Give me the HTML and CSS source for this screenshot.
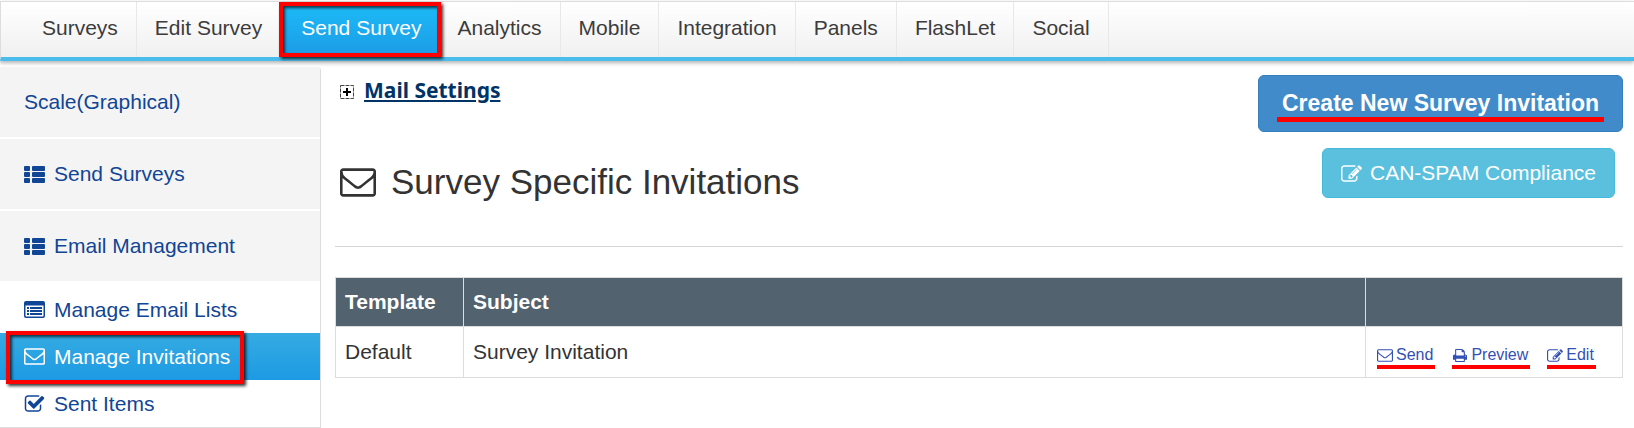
FILE: index.html
```
<!DOCTYPE html>
<html lang="en">
  <head>
    <meta charset="UTF-8" />
    <meta name="viewport" content="width=device-width, initial-scale=1.0" />
    <title>Survey Specific Invitations</title>
    <link rel="stylesheet" href="styles.css">
  </head>
  <body>
    <svg class="sprite" aria-hidden="true">
      <symbol id="envelope" viewBox="0 256 1792 1408">
        <path d="M1664 1504v-768q-32 36-69 66-268 206-426 338-51 43-83 67t-86.500 48.500-102.500 24.500h-2q-48 0-102.500-24.500t-86.500-48.500-83-67q-158-132-426-338-37-30-69-66v768q0 13 9.500 22.500t22.500 9.500h1472q13 0 22.500-9.500t9.500-22.500zm0-1051v-24.500l-.5-13-3-12.500-5.500-9-9-7.500-14-2.500h-1472q-13 0-22.500 9.500t-9.500 22.500q0 168 147 284 193 152 401 317 6 5 35 29.500t46 37.500 44.500 31.500 50.500 27.500 43 9h2q20 0 43-9t50.500-27.500 44.500-31.500 46-37.500 35-29.500q208-165 401-317 54-43 100.500-115.500t46.500-131.500zm128-37v1088q0 66-47 113t-113 47h-1472q-66 0-113-47t-47-113v-1088q0-66 47-113t113-47h1472q66 0 113 47t47 113z"/>
      </symbol>
      <symbol id="pencil" viewBox="0 128 1792 1408">
        <path d="M888 1184l116-116-152-152-116 116v56h96v96h56zm440-720q-16-16-33 1l-350 350q-17 17-1 33t33-1l350-350q17-17 1-33zm80 594v190q0 119-84.500 203.500t-203.500 84.500h-832q-119 0-203.500-84.500t-84.500-203.500v-832q0-119 84.500-203.500t203.500-84.500h832q63 0 117 25 15 7 18 23 3 17-9 29l-49 49q-14 14-32 8-23-6-45-6h-832q-66 0-113 47t-47 113v832q0 66 47 113t113 47h832q66 0 113-47t47-113v-126q0-13 9-22l64-64q15-15 35-7t20 29zm-96-738l288 288-672 672h-288v-288zm444 132l-92 92-288-288 92-92q28-28 68-28t68 28l152 152q28 28 28 68t-28 68z"/>
      </symbol>
      <symbol id="check" viewBox="0 128 1792 1408">
        <path d="M1472 930v318q0 119-84.500 203.500t-203.500 84.500h-832q-119 0-203.500-84.500t-84.500-203.500v-832q0-119 84.500-203.500t203.500-84.500h832q63 0 117 25 15 7 18 23 3 17-9 29l-49 49q-10 10-23 10-3 0-9-2-23-6-45-6h-832q-66 0-113 47t-47 113v832q0 66 47 113t113 47h832q66 0 113-47t47-113v-254q0-13 9-22l64-64q10-10 23-10 6 0 12 3 20 8 20 29zm231-489l-814 814q-24 24-57 24t-57-24l-430-430q-24-24-24-57t24-57l110-110q24-24 57-24t57 24l263 263 647-647q24-24 57-24t57 24l110 110q24 24 24 57t-24 57z"/>
      </symbol>
      <symbol id="print" viewBox="64 128 1664 1536">
        <path d="M448 1536h896v-256h-896v256zm0-640h896v-384h-160q-40 0-68-28t-28-68v-160h-640v640zm1152 64q0-26-19-45t-45-19-45 19-19 45 19 45 45 19 45-19 19-45zm128 0v416q0 13-9.500 22.500t-22.500 9.500h-224v160q0 40-28 68t-68 28h-960q-40 0-68-28t-28-68v-160h-224q-13 0-22.500-9.500t-9.500-22.500v-416q0-79 56.500-135.500t135.500-56.500h64v-544q0-40 28-68t68-28h672q40 0 88 20t76 48l152 152q28 28 48 76t20 88v256h64q79 0 135.500 56.500t56.500 135.500z"/>
      </symbol>
      <symbol id="th-list" viewBox="0 0 21 17">
        <rect width="6" height="5" rx="1"/><rect x="8" width="13" height="5" rx="1"/>
        <rect y="6" width="6" height="5" rx="1"/><rect x="8" y="6" width="13" height="5" rx="1"/>
        <rect y="12" width="6" height="5" rx="1"/><rect x="8" y="12" width="13" height="5" rx="1"/>
      </symbol>
      <symbol id="list-alt" viewBox="0 0 21 17">
        <path fill-rule="evenodd" d="M2 0h17a2 2 0 0 1 2 2v13a2 2 0 0 1-2 2H2a2 2 0 0 1-2-2V2a2 2 0 0 1 2-2zM1.500 4.500V15l.5.5h17l.5-.5V4.500z"/>
        <path d="M3 6h2v2H3zM6 6h12v2H6zM3 9h2v2H3zM6 9h12v2H6zM3 12h2v2H3zM6 12h12v2H6z"/>
      </symbol>
      <symbol id="plus" viewBox="0 0 14 14">
        <rect x=".5" y=".5" width="13" height="13" fill="none" stroke="#444" stroke-dasharray="4 1"/>
        <path d="M6 3h2v3h3v2H8v3H6V8H3V6h3z"/>
      </symbol>
    </svg>

    <nav class="topnav">
      <a href="#">Surveys</a>
      <a href="#">Edit Survey</a>
      <a href="#" class="current">Send Survey</a>
      <a href="#">Analytics</a>
      <a href="#">Mobile</a>
      <a href="#">Integration</a>
      <a href="#">Panels</a>
      <a href="#">FlashLet</a>
      <a href="#">Social</a>
    </nav>

    <div class="page">
      <aside class="sidebar">
        <a href="#" class="group">Scale(Graphical)</a>
        <a href="#" class="group"><svg class="icon"><use href="#th-list"/></svg>Send Surveys</a>
        <a href="#" class="group"><svg class="icon"><use href="#th-list"/></svg>Email Management</a>
        <div class="submenu">
          <a href="#"><svg class="icon"><use href="#list-alt"/></svg>Manage Email Lists</a>
          <a href="#" class="active"><svg class="icon"><use href="#envelope"/></svg>Manage Invitations</a>
          <a href="#"><svg class="icon"><use href="#check"/></svg>Sent Items</a>
        </div>
      </aside>

      <main class="content">
        <div class="heading">
          <div class="titles">
            <div class="settings">
              <svg class="plus"><use href="#plus"/></svg>
              <a href="#">Mail Settings</a>
            </div>
            <h1><svg class="title-icon"><use href="#envelope"/></svg>Survey Specific Invitations</h1>
          </div>
          <div class="buttons">
            <button class="create"><span>Create New Survey Invitation</span></button>
            <button class="spam"><svg class="icon"><use href="#pencil"/></svg>CAN-SPAM Compliance</button>
          </div>
        </div>

        <table>
          <thead>
            <tr>
              <th class="template">Template</th>
              <th>Subject</th>
              <th class="actions"></th>
            </tr>
          </thead>
          <tbody>
            <tr>
              <td>Default</td>
              <td>Survey Invitation</td>
              <td>
                <div class="links">
                  <a href="#"><svg><use href="#envelope"/></svg>Send</a>
                  <a href="#"><svg><use href="#print"/></svg>Preview</a>
                  <a href="#"><svg><use href="#pencil"/></svg>Edit</a>
                </div>
              </td>
            </tr>
          </tbody>
        </table>
      </main>
    </div>
  </body>
</html>
```

FILE: styles.css
```
* {
  box-sizing: border-box;
}
body {
  margin: 0;
  background-color: #fff;
  color: #333;
  font-family: "Liberation Sans", Arial, sans-serif;
  font-size: 21px;
  line-height: 24px;
}
a {
  text-decoration: none;
}
svg {
  flex: none;
  fill: currentColor;
}
.sprite {
  display: none;
}

/* top navigation */
.topnav {
  position: relative;
  display: flex;
  margin-top: 1px;
  padding-left: 23px;
  border-top: 1px solid #ddd;
  border-left: 1px solid #ddd;
  border-bottom: 4px solid #4bbdec;
  background: linear-gradient(#fff, #f0f0f0);
  box-shadow: 0 2px 4px rgba(0, 0, 0, 0.3);
}
.topnav a {
  padding: 14px 18px 17px;
  border-right: 1px solid #e8e8e8;
  color: #3c3c3c;
}
.topnav .current {
  position: relative;
  padding-left: 20px;
  border-right: 0;
  background: linear-gradient(#1cbcf8, #1c9be6);
  color: #fff;
}
/* red frame round the current entries */
.topnav .current::after,
.active::after {
  content: "";
  position: absolute;
  inset: 0 -1px 0 -2px;
  border: 4px solid #f00;
  box-shadow: 2px 2px 3px rgba(0, 0, 0, 0.8), inset 2px 2px 3px rgba(0, 0, 0, 0.7);
}

.page {
  display: flex;
  align-items: flex-start;
}

/* left menu */
.sidebar {
  flex: none;
  width: 321px;
  margin-top: 6px;
  border-right: 1px solid #ddd;
  border-bottom: 1px solid #ddd;
  border-top-right-radius: 4px;
}
.sidebar a {
  display: flex;
  align-items: center;
  gap: 9px;
  height: 47px;
  padding-left: 24px;
  color: #114595;
}
.icon {
  width: 21px;
  height: 17px;
}
.sidebar .group {
  height: 72px;
  border-bottom: 2px solid #fff;
  background-color: #f4f4f4;
}
.submenu {
  padding-top: 3px;
}
.sidebar .active {
  position: relative;
  background: linear-gradient(#36abe2, #1c9ae4);
  color: #fff;
}
.sidebar .active::after {
  inset: -2px 76px -4px 6px;
}

/* right side */
.content {
  flex: 1;
  padding: 14px 11px 0 14px;
}
.heading {
  display: flex;
  justify-content: space-between;
  padding-bottom: 44px;
  border-bottom: 1px solid #d4d4d4;
}
.titles {
  padding-left: 5px;
}
.settings {
  display: flex;
  align-items: center;
  gap: 10px;
  padding-top: 3px;
}
.settings a {
  color: #036;
  font-family: "Noto Sans", Tahoma, sans-serif;
  font-weight: bold;
  text-decoration: underline;
}
.plus {
  width: 14px;
  height: 14px;
  margin-top: 4px;
  color: #000;
}
h1 {
  display: flex;
  align-items: center;
  gap: 15px;
  margin: 60px 0 0;
  font-size: 35px;
  font-weight: normal;
  line-height: 40px;
}
.title-icon {
  width: 36px;
  height: 29px;
}
.buttons {
  display: flex;
  flex-direction: column;
  align-items: flex-end;
  gap: 16px;
}
button {
  border: 1px solid;
  border-radius: 6px;
  color: #fff;
  font-family: inherit;
  line-height: 24px;
  cursor: pointer;
}
.create {
  padding: 15px 18px 9px;
  border-color: #357ebd;
  background-color: #428bca;
  font-size: 23px;
  font-weight: bold;
}
.create span {
  display: block;
  padding: 0 5px 2px;
  border-bottom: 5px solid #f00;
}
.spam {
  display: flex;
  align-items: center;
  gap: 8px;
  margin-right: 8px;
  padding: 12px 18px;
  border-color: #46b8da;
  background-color: #5bc0de;
  font-size: 21px;
}

table {
  width: 100%;
  margin-top: 30px;
  border-collapse: collapse;
}
th,
td {
  padding: 0 9px;
  border: 1px solid #ddd;
  text-align: left;
}
th {
  height: 49px;
  background-color: #53626f;
  color: #fff;
}
td {
  height: 51px;
}
.template {
  width: 128px;
}
.actions {
  width: 257px;
}
.links {
  display: flex;
  gap: 17px;
  padding: 10px 2px 0;
}
.links a {
  display: flex;
  align-items: center;
  gap: 3px;
  padding-right: 2px;
  border-bottom: 4px solid #f00;
  color: #3350b4;
  font-size: 16px;
  line-height: 20px;
}
.links svg {
  width: 16px;
  height: 13px;
}
```
